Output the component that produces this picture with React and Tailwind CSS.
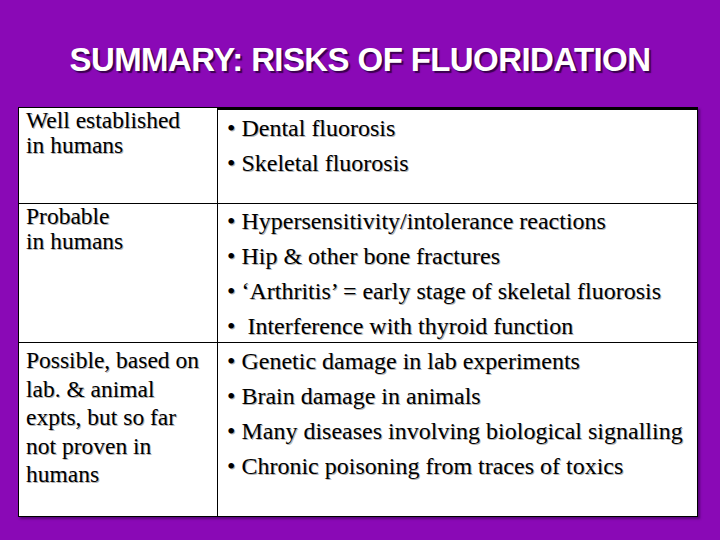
export default function App() {
  const rows = [
    {
      label: ['Well established', 'in humans'],
      items: ['• Dental fluorosis', '• Skeletal fluorosis'],
      h: 'h-[96px]',
      lh: 'leading-[25px] pt-0',
      rt: 'pt-[1px]',
    },
    {
      label: ['Probable', 'in humans'],
      items: [
        '• Hypersensitivity/intolerance reactions',
        '• Hip & other bone fractures',
        '• ‘Arthritis’ = early stage of skeletal fluorosis',
        '•\u00a0\u00a0Interference with thyroid function',
      ],
      h: 'h-[139px]',
      lh: 'leading-[25px] pt-0',
      rt: 'pt-0',
    },
    {
      label: ['Possible, based on', 'lab. & animal', 'expts, but so far', 'not proven in', 'humans'],
      items: [
        '• Genetic damage in lab experiments',
        '• Brain damage in animals',
        '• Many diseases involving biological signalling',
        '• Chronic poisoning from traces of toxics',
      ],
      h: 'h-[174px]',
      lh: 'leading-[28.5px] pt-[3px]',
      rt: 'pt-[1px]',
    },
  ]

  return (
    <div className="w-[720px] h-[540px] bg-[#8a09b6] overflow-hidden">
      {/* Title */}
      <div className="h-[107px] flex items-center justify-center pt-[12px]">
        <h1 className="text-white font-bold text-[33px] tracking-[-0.6px] leading-none font-['Liberation_Sans',Arial,sans-serif] [text-shadow:2px_2px_1px_#3a0050]">
          SUMMARY: RISKS OF FLUORIDATION
        </h1>
      </div>

      {/* Table */}
      <div className="ml-[18px] w-[680px] bg-white border border-black border-t-0 text-black font-['Liberation_Serif','Times_New_Roman',serif] [text-shadow:1px_1px_0_#b4b4b4] shadow-[2px_2px_2px_rgba(40,0,60,0.5)]">
        {rows.map((r, i) => (
          <div key={i} className={`grid grid-cols-[199px_1fr] ${r.h} ${i > 0 ? 'border-t border-black' : ''}`}>
            <div className={`pl-[7px] text-[23.5px] border-r border-black ${r.lh} ${i === 0 ? 'border-t border-black' : ''}`}>
              {r.label.map(l => (
                <div key={l}>{l}</div>
              ))}
            </div>
            <div className={`pl-[9px] text-[24px] leading-[35px] ${r.rt} ${i === 0 ? 'border-t-[3px] border-black' : ''}`}>
              {r.items.map(t => (
                <div key={t} className="whitespace-nowrap">{t}</div>
              ))}
            </div>
          </div>
        ))}
      </div>
    </div>
  )
}
